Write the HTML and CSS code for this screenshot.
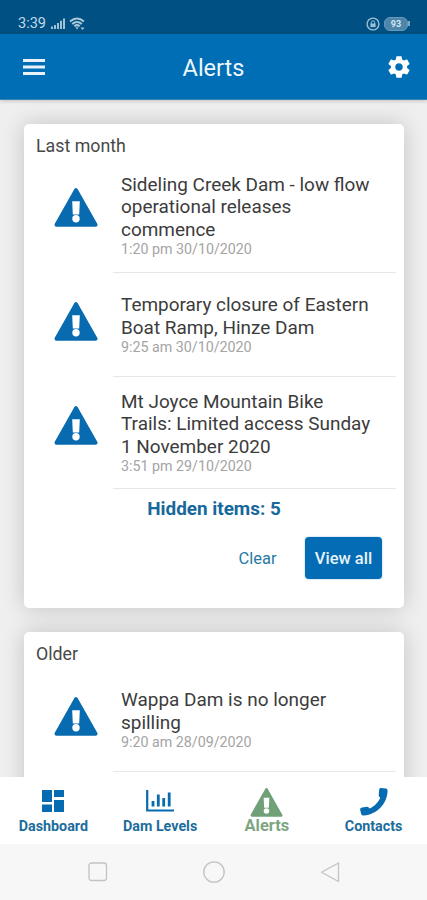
FILE: index.html
```html
<!DOCTYPE html>
<html lang="en">
<head>
<meta charset="utf-8">
<title>Alerts</title>
<link rel="stylesheet" href="styles.css">
</head>
<body>
<svg width="0" height="0" class="defs">
  <symbol id="warn" viewBox="0 0 44 39">
    <path d="M22 2.200 41.500 36.800H2.500Z" fill="currentColor" stroke="currentColor" stroke-width="4" stroke-linejoin="round"/>
    <path d="M18.200 13.200h7.600l-.6 13.200h-6.400Z" fill="#fff"/><circle cx="22" cy="30.800" r="3.700" fill="#fff"/>
  </symbol>
</svg>
<div class="phone">
  <div class="status">
    <span class="time">3:39</span>
    <svg class="signal" width="14" height="11" viewBox="0 0 14 11"><path d="M1 11V8.500M4 11V7M7 11V5M10 11V2.800M13 11V.5" stroke="#b3cede" stroke-width="1.800"/></svg>
    <svg class="wifi" width="17" height="14" viewBox="0 0 17 14" fill="none" stroke="#a9c8da"><path d="M1 4.500Q8 -1.500 15 4.500M3.200 7Q8 3 12.800 7M5.300 9.300Q8 7 10.700 9.300" stroke-width="2"/><path d="M6.300 10.200h3.400L8 12.500Z" fill="#a9c8da" stroke="none"/><path d="M11.500 10.500h4L13.500 13Z" fill="#a9c8da" stroke="none"/></svg>
    <svg class="lock" width="14" height="14" viewBox="0 0 14 14" fill="none" stroke="#9dbfd4"><circle cx="7" cy="7" r="5.900" stroke-width="1.400"/><path d="M5.300 7V5.500a1.700 1.700 0 0 1 3.400 0V7" /><path d="M4.400 6.500h5.200v3.600H4.400Z" fill="#9dbfd4" stroke="none"/></svg>
    <span class="battery">93</span><span class="cap"></span>
  </div>
  <header class="bar">
    <svg width="22" height="16" viewBox="0 0 22 16"><path d="M0 1.500h22M0 8h22M0 14.500h22" stroke="#e8f2f8" stroke-width="2.800"/></svg>
    <h1>Alerts</h1>
    <svg class="gear" width="26" height="26" viewBox="0 0 24 24" fill="#fff"><path d="M19.430 12.980c.04-.32.07-.64.07-.98s-.03-.66-.07-.98l2.110-1.650c.19-.15.24-.42.12-.64l-2-3.460c-.12-.22-.39-.3-.61-.22l-2.490 1c-.52-.4-1.080-.73-1.690-.98l-.38-2.650A.488.488 0 0 0 14 2h-4c-.25 0-.46.18-.49.42l-.38 2.650c-.61.25-1.170.59-1.690.98l-2.490-1c-.23-.09-.49 0-.61.22l-2 3.460c-.13.22-.07.49.12.64l2.110 1.650c-.04.32-.07.65-.07.98s.03.66.07.98l-2.110 1.650c-.19.15-.24.42-.12.64l2 3.460c.12.22.39.3.61.22l2.490-1c.52.4 1.080.73 1.690.98l.38 2.650c.03.24.24.42.49.42h4c.25 0 .46-.18.49-.42l.38-2.650c.61-.25 1.170-.59 1.690-.98l2.490 1c.23.09.49 0 .61-.22l2-3.460c.12-.22.07-.49-.12-.64l-2.110-1.650zM12 15.500c-1.930 0-3.500-1.570-3.500-3.500s1.570-3.500 3.500-3.500 3.500 1.570 3.500 3.500-1.570 3.500-3.500 3.500z"/></svg>
  </header>
  <main>
    <section class="card">
      <h2>Last month</h2>
      <article class="item first"><svg class="warn"><use href="#warn"/></svg>
        <div class="body"><p class="title">Sideling Creek Dam - low flow<br>operational releases<br>commence</p><p class="date">1:20 pm 30/10/2020</p></div></article>
      <article class="item short"><svg class="warn"><use href="#warn"/></svg>
        <div class="body"><p class="title">Temporary closure of Eastern<br>Boat Ramp, Hinze Dam</p><p class="date">9:25 am 30/10/2020</p></div></article>
      <article class="item"><svg class="warn"><use href="#warn"/></svg>
        <div class="body"><p class="title">Mt Joyce Mountain Bike<br>Trails: Limited access Sunday<br>1 November 2020</p><p class="date">3:51 pm 29/10/2020</p></div></article>
      <p class="hidden">Hidden items: 5</p>
      <div class="actions"><button class="clear">Clear</button><button class="view">View all</button></div>
    </section>
    <section class="card older">
      <h2>Older</h2>
      <article class="item short"><svg class="warn"><use href="#warn"/></svg>
        <div class="body"><p class="title">Wappa Dam is no longer<br>spilling</p><p class="date">9:20 am 28/09/2020</p></div></article>
      <div class="rest"></div>
    </section>
  </main>
  <nav class="tabs">
    <a class="tab"><svg width="22" height="22" viewBox="0 0 22 22" fill="currentColor"><path d="M0 0h10v12H0ZM12 0h10v7H12ZM0 14.500h10V22H0ZM12 10h10v12H12Z"/></svg><span>Dashboard</span></a>
    <a class="tab"><svg width="28" height="22" viewBox="0 0 28 22" fill="none" stroke="currentColor"><path d="M1.200 0v20.500H28" stroke-width="2.200"/><path d="M7 16.500V11M12.300 16.500V4.500M17.700 16.500V8M23.200 16.500V2.500" stroke-width="2.800"/></svg><span>Dam Levels</span></a>
    <a class="tab active"><svg width="33" height="29"><use href="#warn"/></svg><span>Alerts</span></a>
    <a class="tab"><svg width="29" height="29" viewBox="0 0 29 29"><path d="M21.800 1 27 1.600Q28.700 2 28.600 4C28 17 18 27.500 5 28.500Q2.700 28.800 2.200 27L1.100 22.800Q.9 20.700 3 20.400L8 19.800Q9.600 19.700 10.600 21.600C15.300 19.500 19.500 15.300 21.200 10.800Q19.500 9.600 19.700 7.800L20.200 2.400Q20.500 1 21.800 1Z" fill="currentColor"/></svg><span>Contacts</span></a>
  </nav>
  <div class="system">
    <svg width="20" height="20" viewBox="0 0 20 20"><rect x="1" y="1" width="17.500" height="17.500" rx="2.500"/></svg>
    <svg width="22" height="22" viewBox="0 0 22 22"><circle cx="11" cy="11" r="10.200"/></svg>
    <svg width="20" height="22" viewBox="0 0 20 22"><path d="M18.500 2v18.500L1.500 11.200Z" stroke-linejoin="round"/></svg>
  </div>
</div>
</body>
</html>
```
FILE: styles.css
```css
* { box-sizing: border-box; margin: 0; padding: 0; }
body { font-family: Roboto, "Liberation Sans", sans-serif; color: #3c3c3c; }
.defs { position: absolute; }
.phone { width: 427px; height: 900px; display: flex; flex-direction: column; overflow: hidden; background: #efefef; }
.status { height: 34px; flex: none; background: #005083; display: flex; align-items: center; padding: 13px 17px 0 18px; color: #c3d9e5; }
.time { font-size: 14.500px; width: 33px; line-height: 18px; }
.wifi { margin-left: 4px; }
.lock { margin-left: auto; }
.battery { margin-left: 4px; width: 24px; height: 14px; border-radius: 6px; background: #4c86aa; border: 1px solid #6799b8; color: #d5e5ee; font-size: 9px; font-weight: 700; line-height: 12px; text-align: center; }
.cap { width: 2px; height: 5px; background: #79a6c0; }
.bar { height: 66px; flex: none; background: #006eb5; display: flex; align-items: center; justify-content: space-between; padding: 0 15px 0 23px; border-bottom: 1px solid #3a82b5; z-index: 1; box-shadow: 0 1px 4px #0003; }
h1 { font-size: 23.500px; font-weight: 400; line-height: 30px; color: #eef6fb; margin: 2px 4px 0 0; }
main { height: 677px; flex: none; overflow: hidden; padding: 24px 23px 0 24px; display: flex; flex-direction: column; gap: 24px; }
.card { flex: none; background: #fff; border-radius: 5px; box-shadow: 0 0 22px #00000030; }
.card:first-child { height: 484px; }
h2 { height: 35px; padding: 11px 12px 0; font-size: 17.800px; font-weight: 400; line-height: 22px; color: #484848; }
.item { height: 112px; display: flex; padding: 0 8px 0 30px; }
.item.first { height: 114px; }
.item.short { height: 104px; }
.older .item { height: 105px; padding-top: 1px; }
.warn { width: 44px; height: 39px; margin: 29px 15px 0 0; flex: none; color: #086bb0; }
.body { flex: 1; display: flex; flex-direction: column; justify-content: center; padding-left: 8px; border-bottom: 1px solid #e7e7e7; }
.title { font-size: 18.950px; line-height: 22.500px; white-space: nowrap; }
.date { font-size: 14.250px; line-height: 16px; color: #a4a4a4; }
.hidden { text-align: center; font-size: 18.900px; font-weight: 700; line-height: 22px; color: #17689c; margin-top: 9px; }
.actions { display: flex; justify-content: flex-end; padding: 17px 22px 0; gap: 18px; }
button { font: 400 16.500px/43px Roboto, sans-serif; border: 0; height: 42px; }
.clear { background: none; color: #287aa5; width: 59px; }
.view { width: 77px; border-radius: 4px; background: #046cb4; color: #e7f2f9; font-weight: 500; box-shadow: 0 0 2px #046cb477; }
.rest { height: 60px; }
.tabs { height: 67px; flex: none; background: #fff; display: grid; grid-template-columns: repeat(4, 106.75px); z-index: 1; }
.tab { display: flex; flex-direction: column; align-items: center; justify-content: flex-end; padding-bottom: 10px; color: #066bb0; font-size: 14.300px; font-weight: 700; line-height: 16px; }
.tab svg { margin-bottom: 6px; }
.tab span { color: #1c6d9c; }
.tab.active { color: #70a078; font-size: 16.400px; padding-bottom: 10px; line-height: 17px; }
.tab.active svg { margin-bottom: 0; }
.tab.active span { color: #7ca580; }
.tab:last-child svg { margin-bottom: 2px; }
.system { height: 56px; flex: none; background: #f7f7f7; display: flex; justify-content: space-between; align-items: center; padding: 0 87px 0 88px; }
.system svg { fill: none; stroke: #c3c3c3; stroke-width: 1.300; }
```
